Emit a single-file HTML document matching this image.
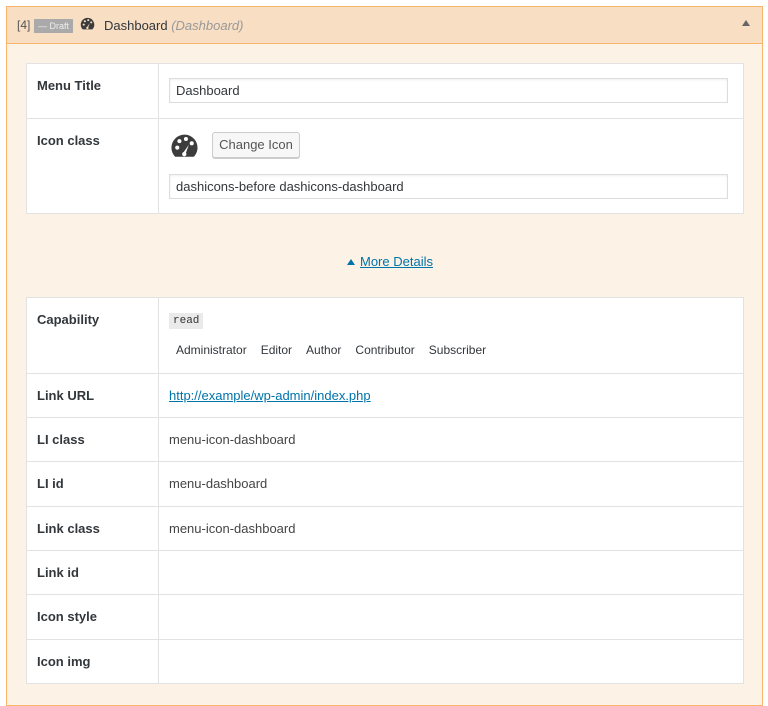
<!DOCTYPE html>
<html><head><style>
body{margin:0;background:#fff;font-family:"Liberation Sans",sans-serif;font-size:13px;color:#23282d;width:768px;height:697px;overflow:hidden;position:relative}
.box{position:absolute;left:6px;top:6px;width:757px;height:700px;border:1px solid #f9b56b;background:#fdf2e6;box-sizing:border-box}
.hd{position:absolute;left:0;top:0;right:0;height:36px;background:#f8dec2;border-bottom:1px solid #f9b56b}
.hd span{position:absolute;top:11px}
table{position:absolute;left:19px;width:718px;border-collapse:collapse;background:#fff}
td{border:1px solid #e2e2e2;vertical-align:top;padding:0}
td.l{width:121px;padding:14px 0 0 10px;font-weight:bold;font-size:13px;color:#32373c}
td.r{padding:0 0 0 10px;color:#444}
.inp{border:1px solid #ddd;height:25px;box-sizing:border-box;width:559px;padding:4px 6px;font-size:13px;box-shadow:inset 0 1px 2px rgba(0,0,0,.07)}
a{color:#0073aa}
</style></head><body>
<div class="box">
<div class="hd">
<span style="left:10px;color:#555;font-size:12px">[4]</span>
<span style="left:27px;top:12px;background:#aaa;color:#eee;font-size:9px;padding:2px 4px">— Draft</span>
<svg style="position:absolute;left:73px;top:10px" width="15" height="13" viewBox="0 0 20 17"><path d="M10 1a9 9 0 0 0-9 9c0 2.5 1 4.7 2.6 6.3h12.8A9 9 0 0 0 10 1z" fill="#3c3c3c"/><circle cx="5" cy="10" r="1.4" fill="#f8dec2"/><circle cx="6.5" cy="5.5" r="1.4" fill="#f8dec2"/><circle cx="11" cy="4" r="1.4" fill="#f8dec2"/><circle cx="15" cy="7" r="1.4" fill="#f8dec2"/><path d="M13 8l-2 5.5a1.5 1.5 0 1 1-1.5-.5z" fill="#f8dec2"/></svg>
<span style="left:97px;font-size:13px;color:#32373c">Dashboard <i style="color:#999">(Dashboard)</i></span>
<span style="left:735px;top:13px;width:0;height:0;border-left:4px solid transparent;border-right:4px solid transparent;border-bottom:6px solid #666"></span>
</div>
<table style="top:56px">
<tr style="height:55px"><td class="l">Menu Title</td><td class="r"><div class="inp" style="margin-top:14px;color:#32373c">Dashboard</div></td></tr>
<tr style="height:95px"><td class="l">Icon class</td><td class="r">
<div style="position:relative;height:55px">
<svg style="position:absolute;left:1px;top:14px" width="29" height="25" viewBox="0 0 20 17"><path d="M10 1a9 9 0 0 0-9 9c0 2.5 1 4.7 2.6 6.3h12.8A9 9 0 0 0 10 1z" fill="#3c3c3c"/><circle cx="5" cy="10" r="1.4" fill="#fff"/><circle cx="6.5" cy="5.5" r="1.4" fill="#fff"/><circle cx="11" cy="4" r="1.4" fill="#fff"/><circle cx="15" cy="7" r="1.4" fill="#fff"/><path d="M13 8l-2 5.5a1.5 1.5 0 1 1-1.5-.5z" fill="#fff"/></svg>
<div style="position:absolute;left:43px;top:13px;width:88px;height:26px;border:1px solid #ccc;border-radius:3px;background:#f7f7f7;box-sizing:border-box;text-align:center;line-height:24px;font-size:13px;color:#555;box-shadow:0 1px 0 #ccc">Change Icon</div>
</div>
<div class="inp" style="color:#32373c">dashicons-before dashicons-dashboard</div></td></tr>
</table>
<div style="position:absolute;left:340px;top:247px;font-size:13px"><span style="display:inline-block;width:0;height:0;border-left:4px solid transparent;border-right:4px solid transparent;border-bottom:6px solid #0073aa;margin-right:5px;vertical-align:1px"></span><a href="#" style="text-decoration:underline">More Details</a></div>
<table style="top:290px">
<tr style="height:76px"><td class="l">Capability</td><td class="r"><div style="margin-top:15px;display:inline-block;background:#eaeaea;font-family:'Liberation Mono',monospace;font-size:11px;padding:2px 4px;color:#333">read</div><div style="margin-top:14px;font-size:12px;color:#32373c"><span style="margin:0 14px 0 7px">Administrator</span><span style="margin-right:14px">Editor</span><span style="margin-right:14px">Author</span><span style="margin-right:14px">Contributor</span><span>Subscriber</span></div></td></tr>
<tr style="height:44px"><td class="l">Link URL</td><td class="r"><a href="#" style="display:block;margin-top:14px">http://example/wp-admin/index.php</a></td></tr>
<tr style="height:44px"><td class="l">LI class</td><td class="r"><div style="margin-top:14px">menu-icon-dashboard</div></td></tr>
<tr style="height:45px"><td class="l">LI id</td><td class="r"><div style="margin-top:14px">menu-dashboard</div></td></tr>
<tr style="height:44px"><td class="l">Link class</td><td class="r"><div style="margin-top:14px">menu-icon-dashboard</div></td></tr>
<tr style="height:44px"><td class="l">Link id</td><td class="r"></td></tr>
<tr style="height:45px"><td class="l">Icon style</td><td class="r"></td></tr>
<tr style="height:44px"><td class="l">Icon img</td><td class="r"></td></tr>
</table>
</div>
</body></html>
